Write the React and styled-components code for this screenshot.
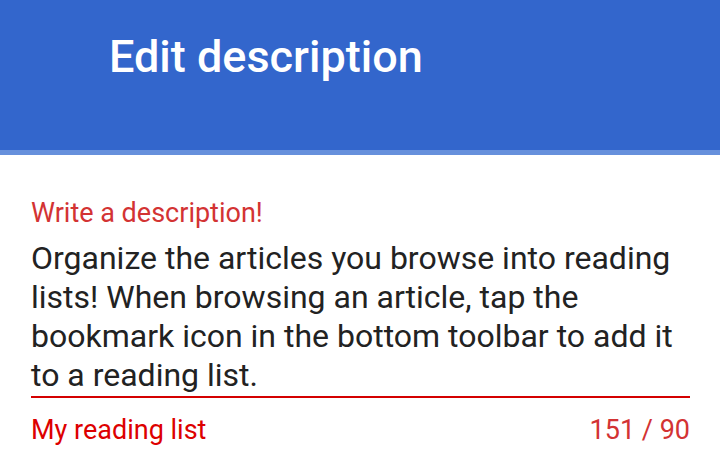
import React from "react";
import styled, { createGlobalStyle } from "styled-components";

const Global = createGlobalStyle`
  html, body { margin: 0; padding: 0; background: #fff; }
  body { font-family: Roboto, "Noto Sans", sans-serif; width: 720px; height: 463px; overflow: hidden; }
`;

const Page = styled.div`
  display: flex;
  flex-direction: column;
  width: 720px;
  height: 463px;
`;

const Header = styled.header`
  height: 150px;
  background: #3366cc;
  border-bottom: 5px solid #6690dc;
  display: flex;
  align-items: flex-start;
  padding-left: 109px;
  box-sizing: content-box;
`;

const Title = styled.h1`
  margin: 0;
  margin-top: 29px;
  color: #fff;
  font-weight: 500;
  font-size: 45px;
  line-height: 56px;
  letter-spacing: 0;
`;

const Body = styled.div`
  padding: 42px 30px 0 31px;
  display: flex;
  flex-direction: column;
`;

const Hint = styled.div`
  color: #d33333;
  font-size: 27px;
  line-height: 32px;
`;

const Field = styled.div`
  margin-top: 10px;
  color: #222;
  font-size: 32px;
  line-height: 39px;
  padding-bottom: 1px;
  border-bottom: 2px solid #d40000;
`;

const Footer = styled.div`
  display: flex;
  justify-content: space-between;
  margin-top: 16px;
  font-size: 27px;
  line-height: 32px;
`;

const Error = styled.span`
  color: #dd0000;
`;

const Counter = styled.span`
  color: #d33333;
`;

export default function App() {
  return (
    <Page>
      <Global />
      <Header>
        <Title>Edit description</Title>
      </Header>
      <Body>
        <Hint>Write a description!</Hint>
        <Field>
          Organize the articles you browse into reading lists! When browsing an article, tap the bookmark icon in the bottom toolbar to add it to a reading list.
        </Field>
        <Footer>
          <Error>My reading list</Error>
          <Counter>151 / 90</Counter>
        </Footer>
      </Body>
    </Page>
  );
}
